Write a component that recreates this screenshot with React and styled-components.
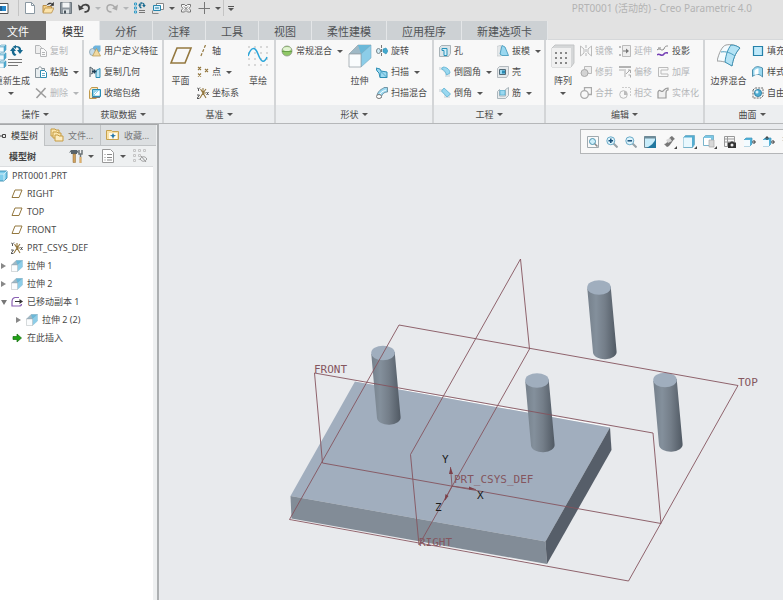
import styled, { createGlobalStyle } from 'styled-components';

const ink = '#4a4a4a';
const pale = '#b4b6b8';
const blue = '#2c8db3';
const sky = '#9ad8f0';
const ice = '#d3effa';
const gold = '#94783f';

/* ---------- icons ---------- */

function Icon({ size = 12, children }) {
  return (
    <svg width={size} height={size} viewBox={`0 0 ${size} ${size}`} fill="none" aria-hidden="true">
      {children}
    </svg>
  );
}

const Cube = ({ x, y, s = 5 }) => (
  <g stroke="#4e9cbd" strokeWidth="0.6">
    <path d={`M${x} ${y + 2}l2-2h${s}l-2 2z`} fill={ice} />
    <path d={`M${x + s} ${y + 2}l2-2v${s}l-2 2z`} fill="#48b0db" />
    <path d={`M${x} ${y + 2}h${s}v${s}h-${s}z`} fill="#f3fbff" />
  </g>
);

const Extrude = ({ size = 24 }) => (
  <svg width={size} height={size} viewBox="0 0 24 24" fill="none" aria-hidden="true">
    <path d="M1 10L10 1h13L13 10z" fill="#9fb9c6" stroke="#8a9aa3" strokeWidth="0.6" />
    <path d="M10 1h13L13 10z" fill="#6ab8d8" />
    <path d="M13 10L23 1v13L13 23z" fill="#8ccde8" stroke="#72a9c2" strokeWidth="0.6" />
    <path d="M1 10h12v13H1z" fill="#fafcfd" stroke="#9aa3a9" strokeWidth="0.8" />
  </svg>
);

const Recycle = ({ x, y }) => (
  <g transform={`translate(${x} ${y})`} fill="#15688f">
    <path d="M0 6L3 2l3 4H4.200C4.200 8 5 9 6.500 9.500L5 11C2.500 10 1.800 8.500 1.800 6z" />
    <path d="M13 5l-3 4-3-4h1.800C8.800 3 8 2.300 6 2.300V4L2.800 1.800 6 0v1C9.500 1 11.200 2.500 11.200 5z" />
  </g>
);

const AppIcon = () => (
  <Icon>
    <path d="M-4 1.500h12v10h-12z" fill="#fff" stroke="#555" />
    <path d="M0 4h6v5H0z" fill="#2688cc" />
    <path d="M0 4h2v5H0z" fill="#1f5f91" />
  </Icon>
);

const NewFile = ({ c = '#8b98a2' }) => (
  <Icon><path d="M1.500.5h6l3 3v8h-9z" fill="#fff" stroke={c} /><path d="M7.500.5v3h3" stroke={c} /></Icon>
);

const OpenFile = () => (
  <Icon>
    <path d="M1 10.500v-7h3.500l1 1h4v2" fill="#f3cf86" stroke="#b98f48" />
    <path d="M1 11l2-5h9l-2.500 5z" fill="#fbe3ab" stroke="#b98f48" strokeWidth="0.8" />
    <path d="M5 3c1-2 3-2.500 5-1.500M8.500 3.500h3V.5z" stroke="#333" fill="#333" strokeWidth="0.6" />
  </Icon>
);

const Save = () => (
  <Icon>
    <path d="M.5.5h11v11H.5z" fill="#8f989f" stroke="#6d777f" />
    <path d="M2.500.5h7v5h-7z" fill="#f2f4f5" />
    <path d="M3 7.500h6v4H3z" fill="#dfe4e6" /><path d="M4 8.500h2v3H4z" fill="#48525a" />
  </Icon>
);

const Undo = () => (
  <Icon><path d="M3 5.500C6 1 11 2.500 11 6c0 2.500-2 4-4.500 4" stroke="#454545" strokeWidth="1.800" /><path d="M0 2.500l1 6 5-2z" fill="#454545" /></Icon>
);
const Redo = () => (
  <Icon><g transform="matrix(-1 0 0 1 12 0)"><path d="M3 5.500C6 1 11 2.500 11 6c0 2.500-2 4-4.500 4" stroke="#aaa" strokeWidth="1.500" /><path d="M0 2.500l1 6 5-2z" fill="#aaa" /></g></Icon>
);
const SmallRegen = () => (
  <Icon>
    <path d="M.5 1h2v2h-2zM.5 5h2v2h-2zM.5 9h2v2h-2z" fill={ice} stroke="#369ac4" />
    <g transform="translate(4 0) scale(.6)"><Recycle x={0} y={0} /></g>
    <path d="M5 8.500h6M5 10.500h6" stroke="#777" />
  </Icon>
);
const Windows = () => (
  <Icon>
    <path d="M4.500 1.500h7v6h-7z" fill="#fff" stroke="#888" />
    <path d="M1.500 3.500h7v5h-7z" fill="#d8f0fa" stroke="#2685ad" />
    <path d="M.5 8.500v3h6" stroke="#888" /><path d="M3.500 5.500h3v1h-3z" fill="#fff" stroke="#2685ad" strokeWidth=".6" />
  </Icon>
);
const CloseX = () => (
  <Icon><path d="M1.500 2.500h3L6 4l1.500-1.500h3v2L9 6.500l1.500 1.500v2h-3L6 8.500 4.500 10h-3V8L3 6.500 1.500 4.500z" fill="#f7f7f7" stroke="#777" /><path d="M4 4.500l4 4m0-4l-4 4" stroke="#777" /></Icon>
);
const Plus = () => <Icon><path d="M6.500 0v12M.5 6.500h12" stroke="#777" /></Icon>;

const Regenerate = () => (
  <Icon size={24}>
    <Cube x={-1} y={1} /><Cube x={-1} y={9} /><Cube x={-1} y={17} />
    <Recycle x={10} y={1} />
    <path d="M8 15.500h14M8 18.500h14M8 21.500h10" stroke="#777" />
  </Icon>
);
const Copy = () => (
  <Icon><path d="M.5.500h4l2 2v6h-6z" fill="#eee" stroke={pale} /><path d="M5.500 3.500h3l3 3v5h-6z" fill="#fafafa" stroke={pale} /><path d="M7 7.500h3M7 9.500h3" stroke={pale} /></Icon>
);
const Paste = () => (
  <Icon><path d="M.5 2.500h9v9h-9z" fill="#e8edef" stroke="#88949b" /><path d="M3 3.500C3 0 7 0 7 3.500" fill="#fff" stroke="#88949b" /><path d="M5.500 4.500h4l2 2v5h-6z" fill="#fff" stroke={blue} /><path d="M7 7.500h3M7 9.500h3" stroke={blue} strokeWidth=".7" /></Icon>
);
const Remove = () => <Icon><path d="M1 1.500l10 9M10.500 1L1.500 11" stroke="#9c9c9c" strokeWidth="1.600" /></Icon>;

const Udf = () => (
  <Icon>
    <path d="M4 2l2-1.500h5.500V6L10 7.500H4z" fill="#6db3dc" />
    <ellipse cx="3.500" cy="7" rx="3" ry="3.500" fill="#c6dce8" stroke="#6e8a9a" strokeWidth=".6" />
    <path d="M7.500 3.500l4 7.500h-8z" fill="#f1d99f" stroke="#b4954d" strokeWidth=".7" />
  </Icon>
);
const CopyGeom = () => (
  <Icon><path d="M1 11V1l3 2v4l-2 1" fill="#c8cdd0" stroke="#59656c" /><path d="M7 4.500l4-2v9H7z" fill="#bce7f7" stroke={blue} /><path d="M3 5.500h4.500M5.500 3.500v4" stroke="#1e405a" strokeWidth="1.500" /></Icon>
);
const Shrink = () => (
  <Icon><path d="M.5 3.500l2-3h6v2M.5 3.500v8h7" fill="#f9e7bd" stroke="#c09a4c" /><path d="M3.500 2.500h8v7h-8z" fill="#8fd0ea" stroke={blue} /><path d="M5 7l2.500-2.500M10 4v4H6z" fill="#fff" stroke="#fff" /><path d="M3 10.500h8" stroke="#777" /></Icon>
);
const Plane = ({ size = 24, w = 1.600 }) => (
  <svg width={size} height={size} viewBox="0 0 24 24" fill="none" aria-hidden="true"><path d="M8 4h14l-6 15H2z" stroke={gold} strokeWidth={w} /></svg>
);
const Axis = () => <Icon><path d="M8.500 0L3.500 12" stroke={gold} strokeWidth="1.200" strokeDasharray="3 1.500" /></Icon>;
const Point = () => (
  <Icon><path d="M1 1l3 3m0-3L1 4M8 3l3 3m0-3L8 6M1 7.500l3 3m0-3l-3 3" stroke={gold} strokeWidth="1.100" /></Icon>
);
const Csys = () => (
  <Icon><path d="M3.500 2L6 6l3-4M6 6l-3 5M6 1v5M6 6l3 5M6 6h3" stroke={gold} strokeWidth="1.100" /><path d="M0 .500l1.500 1.500L3 .5M1.500 2v2M0 8h2.500L0 11.500h2.500M9.500 5l2 3m0-3l-2 3" stroke="#444" strokeWidth=".9" /></Icon>
);
const Sketch = () => (
  <svg width="20" height="24" viewBox="0 0 20 24" fill="none" aria-hidden="true">
    <path d="M.5 3h20M.5 9h20M.5 15h20M.5 21h20" stroke="#777" strokeDasharray="1 5" />
    <path d="M0 12C3 3 7 2 10 10s6 10 9 3" stroke="#2ba6da" strokeWidth="1.500" />
  </svg>
);
const Ball = () => (
  <Icon><circle cx="6" cy="6" r="5" fill="#8fc765" stroke="#8b9685" strokeWidth=".8" /><ellipse cx="6" cy="4" rx="4" ry="2" fill="#e2f3d2" /><path d="M1 6.500h10" stroke="#69a04b" /></Icon>
);
const Revolve = () => (
  <Icon><path d="M5.500 0v12" stroke="#777" strokeDasharray="3 1" /><ellipse cx="2.500" cy="6" rx="2" ry="2.500" fill={ice} stroke="#77838a" /><path d="M7 4l3-1 2 3-2 3-3-2z" fill="#43a9ce" stroke={blue} strokeWidth=".6" /></Icon>
);
const Sweep = () => (
  <Icon><path d="M0 2l4 1 1 2 6 1v5.500H4L3 7 1 5z" fill={sky} stroke={blue} /><path d="M5 5.500l-1 6M5 5.500l6 6" stroke={blue} strokeWidth=".6" /></Icon>
);
const SweptBlend = () => (
  <Icon><path d="M1 8C3 2 7 2 8 .500h3.500V5C8 5 6 7 5 11z" fill={sky} stroke="#5c7f90" strokeWidth=".8" /><ellipse cx="3" cy="9.500" rx="2.500" ry="2" fill="#fff" stroke="#777" /><path d="M4 7c2-3 4-3 6-4" stroke="#fff" /></Icon>
);
const Hole = () => (
  <Icon><path d="M.5 2.500l2-2h9v8l-2 3h-9z" fill="#dce5e9" stroke="#97a3aa" strokeWidth=".8" /><path d="M3 3.500h5v7H5v-5H3z" fill={ice} stroke="#2892b9" /></Icon>
);
const Round = () => (
  <Icon><path d="M0 1h5c4 1 6 3 6 6v4H6V7L3 4H0z" fill="#dde2e5" /><path d="M4 1c4 0 7 3 7 6L7.500 9C7 6 5 4 2.500 3z" fill={sky} stroke="#4eacd0" strokeWidth=".7" /></Icon>
);
const Chamfer = () => (
  <Icon><path d="M0 2h5l6 5v4H5V7L2 5H0z" fill="#dde2e5" /><path d="M5 1l6.500 6L8 10 2.500 4z" fill={sky} stroke="#4eacd0" strokeWidth=".7" /></Icon>
);
const Draft = () => (
  <Icon><path d="M0 1.500L4 0v11H0z" fill="#e5e8ea" stroke="#bcc3c7" strokeWidth=".6" /><path d="M3 9l2-8.500L8 2l3.500 8.500H5z" fill={sky} stroke="#3893b8" strokeWidth=".8" /></Icon>
);
const Shell = () => (
  <Icon><path d="M.5 2.500l2-2h9v8l-2 3h-9z" fill="#e6e9eb" stroke="#a4acb1" strokeWidth=".8" /><path d="M2.500 3.500h6v5h-6z" fill={sky} stroke="#536a77" /><path d="M5 4.500h3v3H5z" fill="#2c8cb5" /></Icon>
);
const Rib = () => (
  <Icon><path d="M.5 4.500l2-2V9h6V2.500L11.500.5v8l-3 3h-8z" fill="#e8ecee" stroke="#99a6ad" strokeWidth=".8" /><path d="M3 3.500h5V8H3z" fill={sky} stroke="#4eacd0" strokeWidth=".7" /></Icon>
);
const Pattern = () => (
  <Icon size={24}>
    <path d="M1 4l3-3h19v18l-3 4H1z" fill="#d5d7d8" stroke="#c3c5c6" />
    <path d="M1 4h19v19H1z" fill="#f0f0f0" />
    <path d="M4 9h2m3 0h2m3 0h2M4 14h2m3 0h2m3 0h2M4 19h2m3 0h2m3 0h2" stroke="#888" strokeWidth="2" />
  </Icon>
);
const Mirror = () => <Icon><path d="M6 0v12" stroke={pale} strokeDasharray="3 1" /><path d="M.5 1l3.500 3v4L.5 11zM11.500 1L8 4v4l3.500 3z" stroke="#bbb" /></Icon>;
const Trim = () => <Icon><path d="M4.500.500h7v7H8C8 5 6.500 3.500 4.500 3.500z" fill="#eee" stroke="#bbb" /><circle cx="4.500" cy="7" r="3.500" fill="#d3d3d3" stroke="#aaa" /></Icon>;
const Merge = () => <Icon><path d="M4.500 3V.5h7v7H8" stroke="#aaa" strokeWidth="1.300" /><circle cx="4.500" cy="7.500" r="3.800" stroke="#aaa" strokeWidth="1.300" /></Icon>;
const Extend = () => <Icon><path d="M3.500.500h8v11h-8z" fill="#eee" stroke="#bbb" /><path d="M0 2h2M0 10h2" stroke="#bbb" strokeWidth="2" /><path d="M4 6h4" stroke="#777" /><path d="M7 3.500L10 6 7 8.500z" fill="#777" /></Icon>;
const Offset = () => <Icon><path d="M0 0h12v2H0z" fill="#b2b2b2" /><path d="M0 3h7v8H5V5H0z" fill="#d4d4d4" /><path d="M7 8l4-4M9 4h2.500v3M9.500 9h2v2.500" stroke="#aaa" /></Icon>;
const Intersect = () => <Icon><circle cx="4.500" cy="7.500" r="3.800" stroke="#bbb" /><path d="M3 .500h8.500v9" stroke="#ccc" strokeDasharray="2 1" /><path d="M5 4c2.500 0 3.500 1 3 4H5z" fill="#bbb" /></Icon>;
const Project = () => <Icon><path d="M0 5c3-3 4 2 7-1 1-3 2-3 4-3M1 3h3" stroke="#888" /><path d="M0 10c3-3 4 3 7-1 1-2 3-1 4-1" stroke="#7540b5" strokeWidth="1.600" /></Icon>;
const Thicken = () => <Icon><path d="M11 1.500H1.500v9H11V8H4V4h7z" stroke="#bbb" /></Icon>;
const Solidify = () => <Icon><path d="M1 11V5c2-4 3 1 5-1s2-3 5-3v2c-2 0-2 1-2 3v5z" fill="#efefef" stroke="#999" strokeWidth="1.200" /></Icon>;
const Boundary = () => (
  <Icon size={24}>
    <path d="M0 17C2 9 5 2 9 1c5-1 10 0 14 3-5 5-7 12-8 18-5-4-10-5-15-5z" fill="#f4fbfe" stroke="#888" strokeWidth=".8" />
    <path d="M14 1c4 0 6 1 9 3-5 5-7 12-8 18l-7-4C9 10 11 5 14 1z" fill="#b4e3f5" stroke="#3c93b7" />
    <path d="M4 8c5-1 10 1 14 4" stroke="#4a9dbf" />
  </Icon>
);
const Fill = () => <Icon><path d="M1.500 1.500h9v9h-9z" fill="#bfe9fa" stroke="#2581a9" strokeWidth="1.200" /></Icon>;
const Style = () => <Icon><path d="M.5 10.500V4c3-4 5-4 10-2v9c-3-3-6-4-10-.5z" fill={sky} stroke="#4c8fac" /><path d="M2.500 9V4.500C4 3 5 2.500 6.500 2.500V8z" fill="#fff" /></Icon>;
const Freestyle = () => <Icon><path d="M1 3l2-2h8v8l-2 2H1z" stroke="#666" strokeDasharray="2 1" /><circle cx="6" cy="6" r="3.600" fill="#4eabd1" stroke="#27789c" strokeWidth=".8" /><circle cx="5" cy="5" r="1.500" fill="#d7f1fb" /></Icon>;

const Part = () => <Icon><path d="M-4 4l3-3h8v7l-3 3h-8z" fill="#7fcdeb" stroke="#257fa5" strokeWidth=".8" /><path d="M-4 4h8v7M4 4l3-3" stroke="#e3f6fd" strokeWidth=".8" /></Icon>;
const Moved = () => <Icon><path d="M8 1.500H4C1 2 1 4 1 6v4h7c2 0 2.500-1 2.500-2" stroke="#8a61b3" strokeWidth="1.200" /><path d="M4 5.500h6" stroke="#333" /><path d="M8.500 3L12 5.500 8.500 8z" fill="#333" /></Icon>;
const Insert = () => <Icon><path d="M2 4.500h4V2L10.500 6 6 10V7.500H2z" fill="#20a315" stroke="#146d10" strokeWidth=".7" /></Icon>;
const Folders = () => <Icon size={14}><path d="M1 1h4l1 1h3v6H1z" fill="#fbe5ac" stroke="#c59b43" /><path d="M3 4h4l1 1h3v5H3z" fill="#fbe5ac" stroke="#c59b43" /><path d="M5 7h3l1 1h4v5H5z" fill="#fdecc0" stroke="#c59b43" /></Icon>;
const Favorite = () => <Icon size={14}><path d="M.5 2.500h5l1 1h6v8H.5z" fill="#f9e2a8" stroke="#c7a24e" /><path d="M3 5h8v6H3z" fill="#fffbe9" /><path d="M7 5l1 2 2 .500-2 1L7 11 6 8.500l-2-1L6 7z" fill="#2475a8" /></Icon>;
const Tools = () => <Icon size={14}><path d="M2 1h6l2 3-2-.5V5H2V3L0 4z" fill="#59646b" /><path d="M4 5h2.500v8.500H4z" fill="#d2a15e" stroke="#8f6c35" strokeWidth=".5" /><path d="M10 1v4h3V1M11.500 5v9" stroke="#6d7478" strokeWidth="1.500" /><path d="M10.500 8h2v6h-2z" fill="#e0b06a" /></Icon>;
const List = () => <Icon size={14}><path d="M1.500.500h8l3 3v10h-11z" fill="#fff" stroke="#999" /><path d="M3.500 5.500h1M3.500 8.500h1M3.500 11h1M6 5.500h5M6 8.500h5M6 11h5" stroke="#888" /></Icon>;
const Hidden = () => <Icon size={14}><path d="M.5.500h2v2h-2zM5.500.500h2v2h-2zM10.500.500h2v2h-2zM.5 5.500h2v2h-2zM5.500 5.500h2v2h-2zM.5 10.500h2v2h-2zM5.500 10.500h2" stroke="#c5c5c5" /><path d="M7 10c2-3 5-3 7 0-2 3-5 3-7 0zM8 7l5 6" stroke="#999" /></Icon>;
const Node = () => <svg width="8" height="12" viewBox="0 0 8 12" fill="none" aria-hidden="true"><path d="M0 6h2M2.500 4.500h3v3h-3z" stroke="#444" /></svg>;

const Glass = ({ sign }) => (
  <Icon><path d="M7.500 7.500l4 4" stroke="#98a2a8" strokeWidth="2" /><circle cx="4.800" cy="4.800" r="4" fill="#def4fc" stroke="#5fa3c2" strokeWidth=".9" /><path d={sign} stroke="#174e78" strokeWidth="1.500" /></Icon>
);
const Refit = () => <Icon><path d="M.5.500h11v11H.5z" fill="#fafafa" stroke="#a0a9ae" /><path d="M7.500 7.500l3 3" stroke="#888" strokeWidth="1.500" /><circle cx="5.500" cy="5.500" r="3" fill="#cdeefa" stroke="#4d94b0" /></Icon>;
const Repaint = () => <Icon><path d="M.5.500h11v11H.5z" fill="#c8ecfa" stroke="#6e8793" /><path d="M12 2C10 7 7 10 2 12h10z" fill="#21779f" /><path d="M.5.500h11v2H.5z" fill="#6e8c9a" /></Icon>;
const Shading = () => <Icon size={14}><path d="M1 9c4 0 4-7 8-8l3 3C9 5 8 11 4 12z" fill="#777" /><path d="M3 5l4-2 2 3-4 2z" fill="#d6d6d6" /><path d="M14 11v3h-3z" fill="#444" /></Icon>;
const Display = () => <Icon size={14}><path d="M.5 2.500l2-2h9v9l-2 3h-9z" fill="#53add2" stroke="#6aa9c3" strokeWidth=".8" /><path d="M.5 2.500h8.500v9.500H.5z" fill="#e9f8fe" /><path d="M14 11v3h-3z" fill="#444" /></Icon>;
const Saved = () => <Icon size={14}><path d="M.5 2.500l2-2h8v7l-2 3h-8z" fill="#7cc7e5" stroke="#6aa9c3" strokeWidth=".8" /><path d="M1 3h7v7H1z" fill="#fff" /><path d="M6 5h5v7H6z" fill="#d8d8d8" stroke="#aaa" strokeWidth=".7" /><path d="M14 11v3h-3z" fill="#444" /></Icon>;
const ViewManager = () => <Icon><path d="M.5.500h10v10H.5zM3.500.500v10M.5 3h10M.5 6h10" stroke="#999" /><path d="M4 6.500h2l1-1h2l1 1h2V12H4z" fill="#333" /><circle cx="8" cy="9" r="1.500" fill="#eee" /></Icon>;
const Datum = ({ up }) => <Icon><path d="M0 4l2-2h6v6l-2 2H0z" fill="#52b3d9" stroke="#4295ba" strokeWidth=".7" /><path d="M0 4h6v6H0z" fill="#f3fbff" /><path d="M8 6h3M9.500 4l2 2-2 2" stroke="#333" />{up && <path d="M4 4V1M2.500 2.500L4 .500l1.500 2" stroke="#333" />}</Icon>;
const Axes = () => <Icon><path d="M1 1l4 4m0-4L1 5M7 8l4 4" stroke={gold} strokeWidth="1.500" /></Icon>;

/* ---------- data ---------- */

const tabs = ['分析', '注释', '工具', '视图', '柔性建模', '应用程序', '新建选项卡'];

const groups = [
  {
    name: '操作', cols: '30px 1fr', width: 84, bleed: true,
    parts: [
      { big: '重新生成', icon: <Regenerate />, menu: true, end: true },
      [['复制', <Copy />, 0, 1], ['粘贴', <Paste />, 1], ['删除', <Remove />, 1, 1]],
    ],
  },
  {
    name: '获取数据', cols: '1fr', width: 80,
    parts: [[['用户定义特征', <Udf />], ['复制几何', <CopyGeom />], ['收缩包络', <Shrink />]]],
  },
  {
    name: '基准', cols: '23px 46px 20px', width: 112,
    parts: [
      { big: '平面', icon: <Plane /> },
      [['轴', <Axis />], ['点', <Point />, 1], ['坐标系', <Csys />]],
      { big: '草绘', icon: <Sketch /> },
    ],
  },
  {
    name: '形状', cols: '62px 23px 1fr', width: 158,
    parts: [
      [['常规混合', <Ball />, 1]],
      { big: '拉伸', icon: <Extrude /> },
      [['旋转', <Revolve />], ['扫描', <Sweep />, 1], ['扫描混合', <SweptBlend />]],
    ],
  },
  {
    name: '工程', cols: '53px 1fr', width: 112,
    parts: [
      [['孔', <Hole />], ['倒圆角', <Round />, 1], ['倒角', <Chamfer />, 1]],
      [['拔模', <Draft />, 1], ['壳', <Shell />], ['筋', <Rib />, 1]],
    ],
  },
  {
    name: '编辑', cols: '24px 34px 33px 1fr', width: 159,
    parts: [
      { big: '阵列', icon: <Pattern />, menu: true },
      [['镜像', <Mirror />, 0, 1], ['修剪', <Trim />, 0, 1], ['合并', <Merge />, 0, 1]],
      [['延伸', <Extend />, 0, 1], ['偏移', <Offset />, 0, 1], ['相交', <Intersect />, 0, 1]],
      [['投影', <Project />], ['加厚', <Thicken />, 0, 1], ['实体化', <Solidify />, 0, 1]],
    ],
  },
  {
    name: '曲面', cols: '37px 1fr', width: 96,
    parts: [
      { big: '边界混合', icon: <Boundary /> },
      [['填充', <Fill />], ['样式', <Style />], ['自由', <Freestyle />]],
    ],
  },
];

const tree = [
  { label: 'RIGHT', icon: <Plane size={12} w={2} /> },
  { label: 'TOP', icon: <Plane size={12} w={2} /> },
  { label: 'FRONT', icon: <Plane size={12} w={2} /> },
  { label: 'PRT_CSYS_DEF', icon: <Csys /> },
  { label: '拉伸 1', icon: <Extrude size={12} />, toggle: 'closed' },
  { label: '拉伸 2', icon: <Extrude size={12} />, toggle: 'closed' },
  { label: '已移动副本 1', icon: <Moved />, toggle: 'open' },
  { label: '拉伸 2 (2)', icon: <Extrude size={12} />, toggle: 'closed', depth: 1 },
  { label: '在此插入', icon: <Insert /> },
];

const viewTools = [
  ['重新调整', <Refit />],
  ['放大', <Glass sign="M2.500 4.800h4.600M4.800 2.500v4.600" />],
  ['缩小', <Glass sign="M2.500 4.800h4.600" />],
  ['重画', <Repaint />, 1],
  ['渲染', <Shading />, 1],
  ['显示样式', <Display />, 1],
  ['已保存方向', <Saved />, 1],
  ['视图管理器', <ViewManager />, 1],
  ['基准显示', <Datum />],
  ['注释显示', <Datum up />],
  ['旋转中心', <Axes />],
];

const pins = [[383, 353], [537, 380.500], [599, 287.500], [665, 380]];

/* ---------- parts ---------- */

function Ribbon() {
  return (
    <RibbonBar>
      {groups.map((g) => (
        <Group key={g.name} $width={g.width} $bleed={g.bleed} aria-label={g.name}>
          <GroupBody $cols={g.cols} $bleed={g.bleed}>
            {g.parts.map((part, i) => (part.big ? (
              <BigButton key={i} $end={part.end}>
                {part.icon}
                <span>{part.big}</span>
                {part.menu && <Caret />}
              </BigButton>
            ) : (
              <Column key={i}>
                {part.map(([label, icon, menu, off]) => (
                  <Command key={label} disabled={!!off}>
                    {icon}
                    <span>{label}</span>
                    {!!menu && <Caret $pale={off} />}
                  </Command>
                ))}
              </Column>
            )))}
          </GroupBody>
          <GroupName>{g.name}<Caret /></GroupName>
        </Group>
      ))}
    </RibbonBar>
  );
}

function Sidebar() {
  return (
    <Side>
      <SideTabs role="tablist">
        <SideTab role="tab" aria-selected="true" $on><Node />模型树</SideTab>
        <SideTab role="tab" aria-selected="false"><Folders />文件...</SideTab>
        <SideTab role="tab" aria-selected="false"><Favorite />收藏...</SideTab>
      </SideTabs>
      <SideHead>
        <h2>模型树</h2>
        <HeadTools>
          <ToolButton aria-label="设置"><Tools /><Caret /></ToolButton>
          <ToolButton aria-label="显示"><List /><Caret /></ToolButton>
          <ToolButton aria-label="隐藏"><Hidden /></ToolButton>
        </HeadTools>
      </SideHead>
      <Tree>
        <Root><Part />PRT0001.PRT</Root>
        {tree.map((n, i) => (
          <TreeRow key={i} $depth={n.depth || 0}>
            {n.toggle ? <Toggle aria-label={n.label} $open={n.toggle === 'open'} /> : <Blank />}
            {n.icon}
            <span>{n.label}</span>
          </TreeRow>
        ))}
      </Tree>
    </Side>
  );
}

function Scene() {
  return (
    <SceneSvg viewBox="159 125 624 475" preserveAspectRatio="xMinYMin meet" role="img" aria-label="PRT0001">
      <defs>
        <linearGradient id="pin" x1="0" x2="1" y1="0" y2="0">
          <stop offset="0" stopColor="#75808b" />
          <stop offset="0.3" stopColor="#84909c" />
          <stop offset="0.6" stopColor="#747e89" />
          <stop offset="1" stopColor="#505963" />
        </linearGradient>
      </defs>
      <path d="M291 520l256 45.500M355 381l255 46" stroke="#fff" />
      <path d="M355 381.500L610 427.500L545.500 541.500L290.500 496z" fill="#a1aebe" />
      <path d="M290.500 496L545.500 541.500L547 564L291.500 518.500z" fill="#828c97" />
      <path d="M545.500 541.500L610 427.500L611.500 450L547 564z" fill="#565e69" />
      {pins.map(([x, y]) => (
        <g key={x} transform={`translate(${x} ${y})`}>
          <path d="M-11.700 1L-6 65a11.800 7.200 0 0 0 23.600-1L11.700 -1z" fill="url(#pin)" />
          <ellipse rx="11.800" ry="7.300" fill="#a0aebe" />
        </g>
      ))}
      <g stroke="#84535d" strokeWidth=".9" fill="none">
        <path d="M399 325L738 385.500L628.500 581L289.500 519.500z" />
        <path d="M314.500 373L653 433L661 523.500L322.500 463z" />
        <path d="M520.500 259L529.500 349L419 545L410.500 454.500z" />
        <path d="M452 486l-1.500-19M452 486l24 3.500M452 486l-7 14" />
      </g>
      <path d="M450.500 467l-1.500 7h4zM476 489.500l-7-3v3zM444.500 501l1-7 3 2z" fill="#7d4049" />
      <DatumText x="314" y="373">FRONT</DatumText>
      <DatumText x="738" y="386">TOP</DatumText>
      <DatumText x="454" y="483">PRT_CSYS_DEF</DatumText>
      <DatumText x="419" y="546">RIGHT</DatumText>
      <DatumText x="442" y="463" $dark>Y</DatumText>
      <DatumText x="477" y="499" $dark>X</DatumText>
      <DatumText x="435" y="511" $dark>Z</DatumText>
    </SceneSvg>
  );
}

export default function App() {
  return (
    <Page>
      <GlobalStyle />
      <TitleBar>
        <QuickButton aria-label="窗口" $first><AppIcon /></QuickButton>
        <Divider />
        <QuickButton aria-label="新建"><NewFile /></QuickButton>
        <QuickButton aria-label="打开"><OpenFile /></QuickButton>
        <QuickButton aria-label="保存"><Save /></QuickButton>
        <QuickButton aria-label="撤消"><Undo /></QuickButton>
        <QuickMenu aria-label="撤消列表"><Caret $pale /></QuickMenu>
        <QuickButton aria-label="重做"><Redo /></QuickButton>
        <QuickMenu aria-label="重做列表"><Caret $pale /></QuickMenu>
        <QuickButton aria-label="重新生成"><SmallRegen /></QuickButton>
        <QuickButton aria-label="窗口列表"><Windows /></QuickButton>
        <QuickMenu aria-label="更多窗口"><Caret /></QuickMenu>
        <QuickButton aria-label="关闭"><CloseX /></QuickButton>
        <QuickButton aria-label="添加"><Plus /></QuickButton>
        <QuickMenu aria-label="更多"><Caret /></QuickMenu>
        <Divider />
        <QuickMenu aria-label="自定义" $lined><Caret /></QuickMenu>
        <Title>PRT0001 (活动的) - Creo Parametric 4.0</Title>
      </TitleBar>
      <Tabs role="tablist">
        <FileTab>文件</FileTab>
        <Tab role="tab" aria-selected="true" $on>模型</Tab>
        {tabs.map((t) => <Tab key={t} role="tab" aria-selected="false">{t}</Tab>)}
      </Tabs>
      <Ribbon />
      <Work>
        <Sidebar />
        <Canvas>
          <Scene />
          <ViewBar>
            {viewTools.map(([label, icon, wide]) => (
              <ViewButton key={label} aria-label={label} $wide={wide}>{icon}</ViewButton>
            ))}
          </ViewBar>
        </Canvas>
      </Work>
    </Page>
  );
}

/* ---------- styles ---------- */

const GlobalStyle = createGlobalStyle`
* {
  box-sizing: border-box;
}
body {
  margin: 0;
  overflow: hidden;
  font-family: 'Noto Sans', 'Noto Sans CJK SC', sans-serif;
  font-size: 9px;
  color: ${ink};
}
button {
  display: flex;
  align-items: center;
  margin: 0;
  padding: 0;
  border: 0;
  background: none;
  font: inherit;
  color: inherit;
  white-space: nowrap;
}
svg {
  flex: none;
}
`;

const Page = styled.div`
display: flex;
flex-direction: column;
height: 100vh;
overflow: hidden;
background: #e8eaed;
`;

const TitleBar = styled.header`
display: flex;
align-items: center;
flex: none;
height: 21px;
padding-bottom: 5px;
background: #e2e2e2;
`;

const QuickButton = styled.button`
flex: none;
justify-content: ${props => (props.$first ? 'flex-start' : 'center')};
width: 18px;
height: 16px;
`;

const QuickMenu = styled.button`
flex: none;
flex-direction: column;
justify-content: center;
gap: 1px;
width: 10px;
height: 16px;
&::before {
  content: '';
  display: ${props => (props.$lined ? 'block' : 'none')};
  width: 6px;
  height: 1px;
  background: #555;
}
`;

const Divider = styled.span`
flex: none;
width: 1px;
height: 16px;
margin-right: 2px;
background: #c4c4c4;
`;

const Caret = styled.i`
flex: none;
width: 0;
height: 0;
border: 3px solid transparent;
border-top-color: ${props => (props.$pale ? pale : '#555')};
border-bottom: 0;
`;

const Title = styled.h1`
margin: 0 31px 0 auto;
font-size: 10px;
font-weight: 400;
line-height: 16px;
white-space: nowrap;
color: #b3b3b3;
`;

const Tabs = styled.nav`
display: flex;
flex: none;
height: 19px;
background: #e2e2e2;
border-bottom: 1px solid #d6d8da;
`;

const Tab = styled.button`
height: 19px;
padding: 0 15px;
border-right: 1px solid #e4e6e8;
font-size: 11px;
color: ${props => (props.$on ? '#333' : '#505356')};
background: ${props => (props.$on ? '#f8f8f8' : '#cdd1d4')};
`;

const FileTab = styled(Tab)`
padding: 0 17px 0 7px;
border-right-color: #f8f8f8;
color: #fff;
background: #696969;
`;

const RibbonBar = styled.div`
display: flex;
flex: none;
background: #f8f8f8;
border-bottom: 1px solid #b5b7b9;
`;

const Group = styled.section`
flex: none;
width: ${props => (props.$bleed ? props.$width + 12 : props.$width)}px;
margin-left: ${props => (props.$bleed ? '-12px' : 0)};
border-right: 2px solid #d3d5d7;
`;

const GroupBody = styled.div`
display: grid;
grid-template-columns: ${props => props.$cols};
column-gap: 5px;
height: 65px;
padding: 1px 0 0 ${props => (props.$bleed ? 12 : 5)}px;
`;

const Column = styled.div`
display: flex;
flex-direction: column;
gap: 1px;
min-width: 0;
`;

const Command = styled.button`
gap: 3px;
height: 20px;
line-height: 20px;
color: ${props => (props.disabled ? pale : ink)};
& > i {
  margin-left: 2px;
}
`;

const BigButton = styled.button`
flex-direction: column;
align-items: ${props => (props.$end ? 'flex-end' : 'center')};
min-width: 0;
height: 60px;
padding-top: 3px;
& > svg {
  align-self: ${props => (props.$end ? 'flex-start' : 'center')};
}
& > span {
  flex: none;
  margin: 7px 0 5px;
  line-height: 12px;
}
& > i {
  align-self: center;
  margin-right: ${props => (props.$end ? 8 : 0)}px;
}
`;

const GroupName = styled.div`
display: flex;
align-items: center;
justify-content: center;
gap: 3px;
height: 18px;
background: #eceef0;
`;

const Work = styled.main`
display: flex;
flex: 1;
min-height: 0;
`;

const Side = styled.aside`
display: flex;
flex-direction: column;
flex: none;
width: 159px;
border-top: 1px solid #a6a8aa;
border-right: 2px solid #adb0b2;
background: #eef0f1;
`;

const SideTabs = styled.div`
display: flex;
flex: none;
height: 21px;
`;

const SideTab = styled.button`
flex: ${props => (props.$on ? '0 0 44px' : '0 0 56px')};
gap: ${props => (props.$on ? 3 : 4)}px;
padding-left: ${props => (props.$on ? 0 : 5)}px;
border: solid #bfc2c4;
border-width: ${props => (props.$on ? 0 : '0 0 1px 1px')};
color: ${props => (props.$on ? '#333' : '#777')};
background: ${props => (props.$on ? '#eef0f1' : '#dcdfe1')};
`;

const SideHead = styled.div`
display: flex;
align-items: center;
flex: none;
height: 20px;
padding-left: 9px;
h2 {
  flex: none;
  margin: 0;
  font-size: 9px;
  color: #444;
}
`;

const HeadTools = styled.div`
display: flex;
align-items: center;
gap: 7px;
padding-left: 33px;
`;

const ToolButton = styled.button`
gap: 5px;
`;

const Tree = styled.ul`
flex: 1;
margin: 0 4px 0 0;
padding: 0;
list-style: none;
border-top: 1px solid #dcdee0;
background: #fff;
`;

const TreeRow = styled.li`
display: flex;
align-items: center;
gap: 4px;
height: 18px;
padding-left: ${props => props.$depth * 15}px;
line-height: 18px;
white-space: nowrap;
`;

const Root = styled(TreeRow).attrs({ $depth: 0 })`
gap: 0;
`;

const Blank = styled.span`
flex: none;
width: 7px;
`;

const Toggle = styled.button`
flex: none;
justify-content: center;
width: 7px;
height: 18px;
&::before {
  content: '';
  border: solid transparent;
  border-width: ${props => (props.$open ? '5px 3px 0' : '3px 0 3px 5px')};
  border-top-color: ${props => (props.$open ? '#777' : 'transparent')};
  border-left-color: ${props => (props.$open ? 'transparent' : '#888')};
}
`;

const Canvas = styled.div`
position: relative;
flex: 1;
min-width: 0;
border-top: 1px solid #e8eaed;
overflow: hidden;
`;

const SceneSvg = styled.svg`
display: block;
width: 100%;
height: 100%;
`;

const DatumText = styled.text`
font-family: 'DejaVu Sans Mono', monospace;
font-size: 11px;
fill: ${props => (props.$dark ? '#1c1c1c' : '#84565f')};
`;

const ViewBar = styled.div`
position: absolute;
top: 4px;
right: -15px;
display: flex;
height: 25px;
padding-left: 2px;
border: 1px solid #b4b6b8;
background: #f8f8f8;
`;

const ViewButton = styled.button`
justify-content: center;
width: ${props => (props.$wide ? 20 : 19)}px;
`;
